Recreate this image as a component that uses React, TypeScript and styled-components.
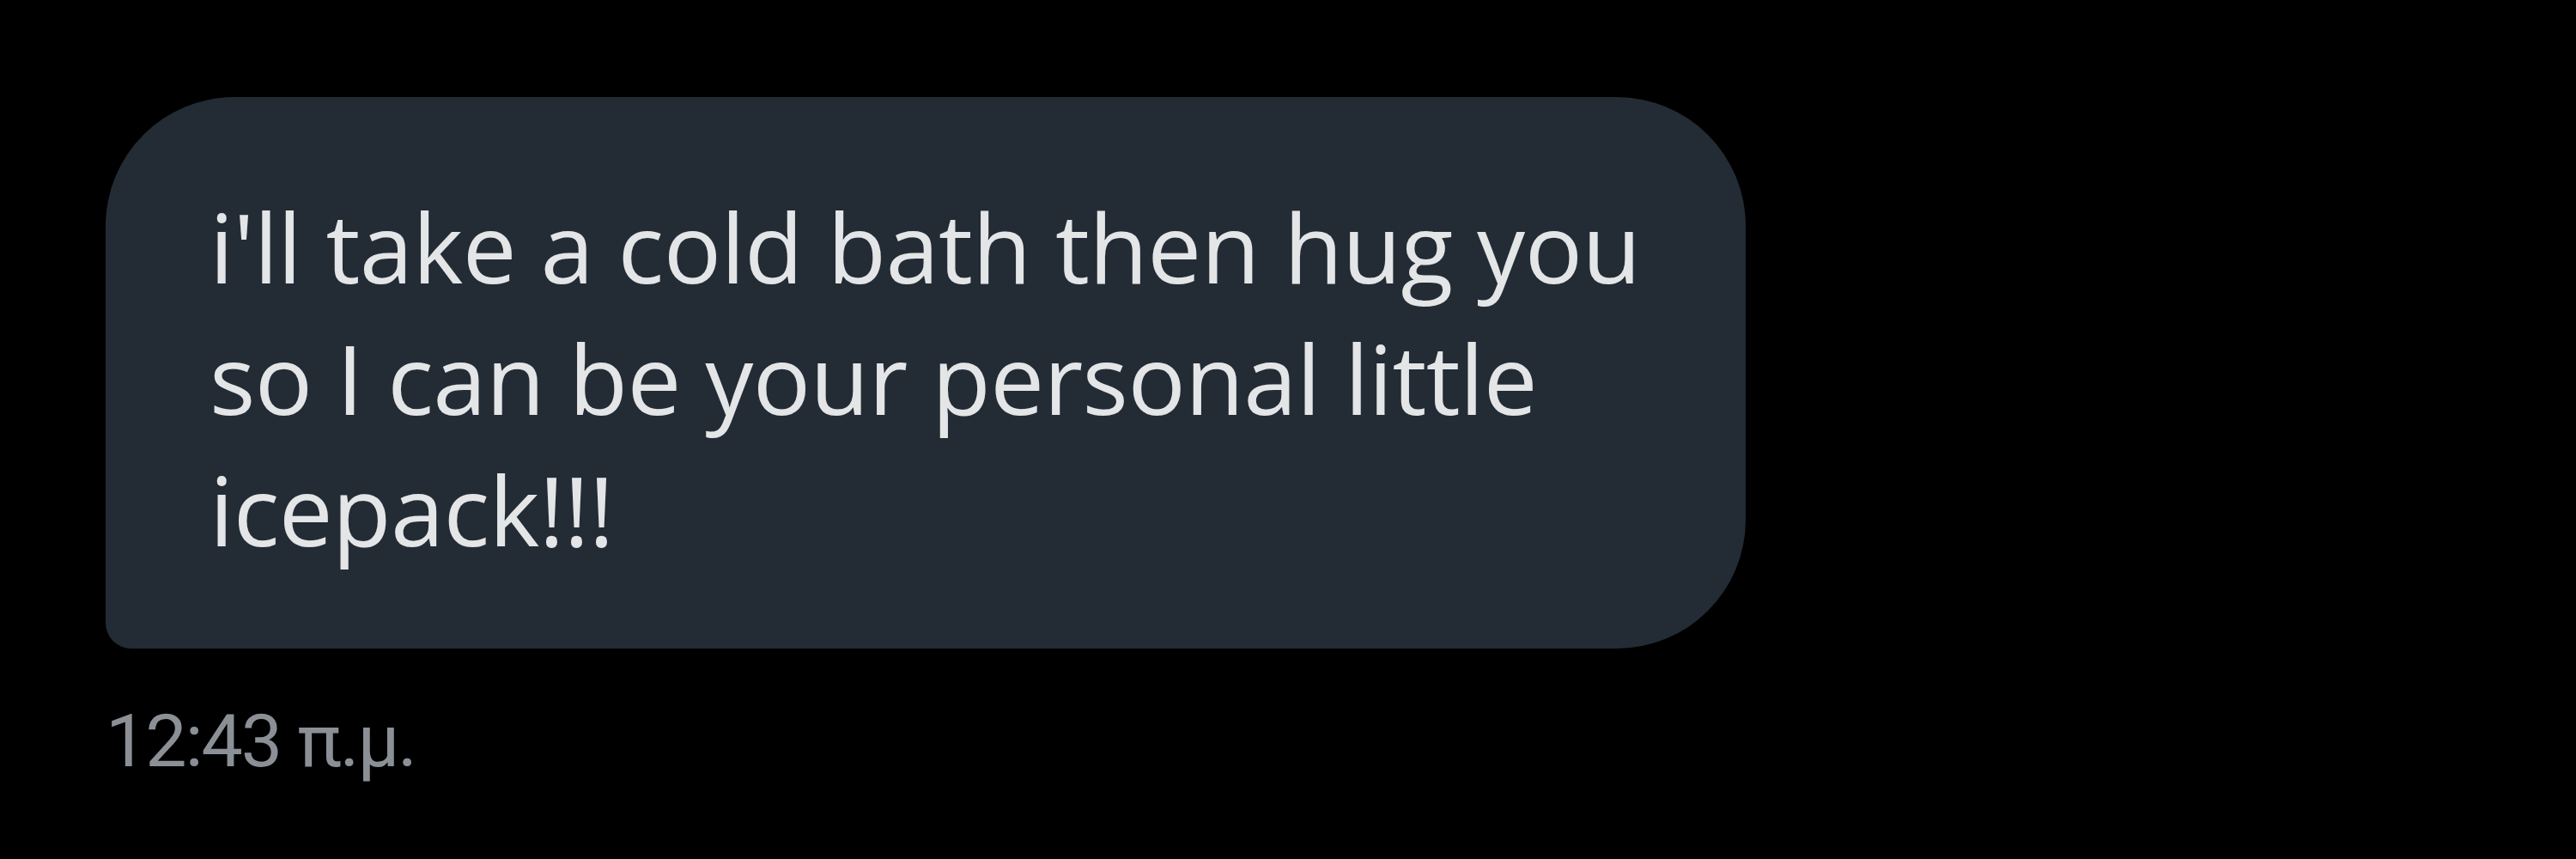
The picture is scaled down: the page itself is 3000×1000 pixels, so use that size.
import React from "react";
import styled, { createGlobalStyle } from "styled-components";

const Global = createGlobalStyle`
  html, body {
    margin: 0;
    padding: 0;
    background: #000000;
  }
  body {
    width: 3000px;
    height: 1000px;
    overflow: hidden;
  }
`;

const Page = styled.main`
  box-sizing: border-box;
  width: 3000px;
  height: 1000px;
  background: #000000;
  padding: 113px 0 0 123px;
  display: flex;
  flex-direction: column;
  align-items: flex-start;
`;

const Bubble = styled.div`
  box-sizing: border-box;
  width: 1910px;
  padding: 97px 96px 86px 121px;
  background: #232c35;
  border-radius: 150px 150px 150px 30px;
  color: #e3e5e7;
  font-family: "Open Sans", "Noto Sans", sans-serif;
  font-size: 112px;
  line-height: 153px;
  letter-spacing: -0.6px;
  font-weight: 400;
`;

const Timestamp = styled.time`
  margin-top: 65px;
  color: #8b9096;
  font-family: Roboto, "Liberation Sans", sans-serif;
  font-size: 86px;
  line-height: 86px;
  letter-spacing: -2px;
`;

export default function App() {
  return (
    <>
      <Global />
      <Page>
        <Bubble>
          i'll take a cold bath then hug you so I can be your personal little
          icepack!!!
        </Bubble>
        <Timestamp>12:43 π.μ.</Timestamp>
      </Page>
    </>
  );
}
